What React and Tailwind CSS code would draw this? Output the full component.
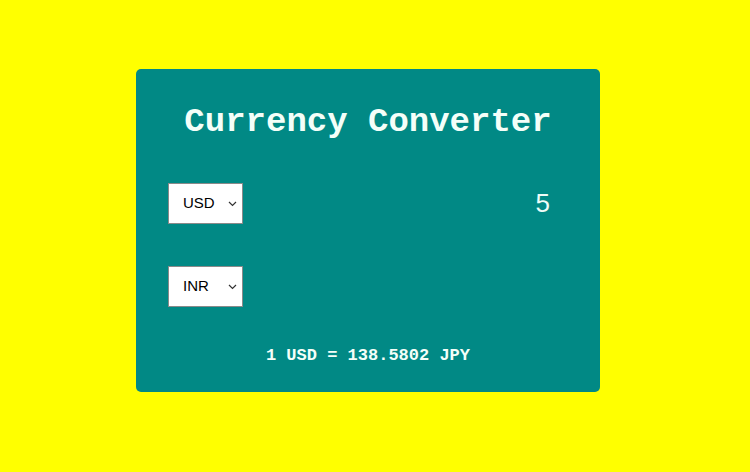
import React, { useState } from "react";

function CurrencySelect({ value, onChange }) {
  return (
    <div className="relative w-[75px] h-[41px]">
      <select
        value={value}
        onChange={(e) => onChange(e.target.value)}
        className="appearance-none w-full h-full bg-white border border-[#8a8a8a] text-black text-[15px] pl-[14px] font-['Liberation_Sans',Arial,sans-serif] outline-none"
      >
        <option>USD</option>
        <option>INR</option>
        <option>JPY</option>
        <option>EUR</option>
      </select>
      <svg
        className="absolute right-[6px] top-[18px] pointer-events-none"
        width="9"
        height="6"
        viewBox="0 0 9 6"
        fill="none"
        stroke="#333"
        strokeWidth="1.2"
      >
        <path d="M1 1 L4.5 4.5 L8 1" />
      </svg>
    </div>
  );
}

export default function App() {
  const [from, setFrom] = useState("USD");
  const [to, setTo] = useState("INR");
  const [amount, setAmount] = useState("5");

  return (
    <div className="w-[750px] h-[472px] bg-[#ffff00] pt-[69px] pl-[136px]">
      <div className="w-[464px] h-[323px] bg-[#018985] rounded-[5px] flex flex-col pt-[33px]">
        <h1 className="whitespace-nowrap text-center text-[34px] leading-[40px] font-bold text-[#f4fff9] font-['Liberation_Mono','Courier_New',monospace]">
          Currency Converter
        </h1>

        {/* from row */}
        <div className="mt-[41px] pl-[32px] pr-[50px] flex items-center justify-between">
          <CurrencySelect value={from} onChange={setFrom} />
          <input
            value={amount}
            onChange={(e) => setAmount(e.target.value)}
            className="w-[120px] bg-transparent text-right text-[26px] text-[#eefcf8] font-['Liberation_Sans',Arial,sans-serif] outline-none"
          />
        </div>

        {/* to row */}
        <div className="mt-[42px] pl-[32px] flex items-center">
          <CurrencySelect value={to} onChange={setTo} />
        </div>

        <p className="mt-[36px] whitespace-nowrap text-center text-[17px] font-bold text-[#f4fff9] font-['Liberation_Mono','Courier_New',monospace]">
          1 USD = 138.5802 JPY
        </p>
      </div>
    </div>
  );
}
